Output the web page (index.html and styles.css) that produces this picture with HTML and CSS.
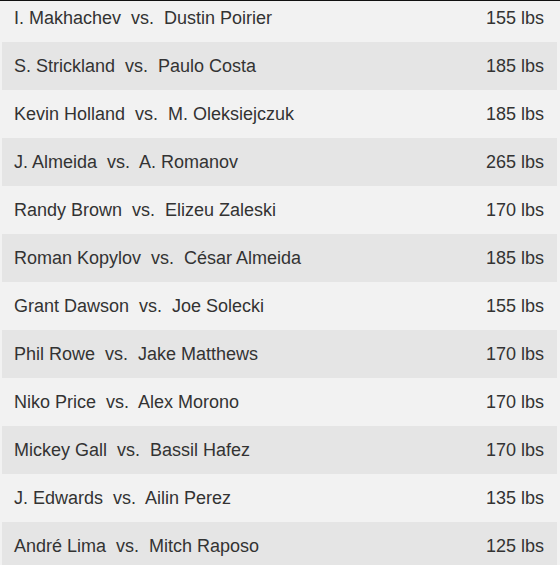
FILE: index.html
```html
<!DOCTYPE html>
<html>
<head>
<meta charset="utf-8">
<link rel="stylesheet" href="styles.css">
</head>
<body>
<ul class="fights">
  <li class="fight"><span class="bout">I. Makhachev&nbsp; vs.&nbsp; Dustin Poirier</span><span class="weight">155 lbs</span></li>
  <li class="fight"><span class="bout">S. Strickland&nbsp; vs.&nbsp; Paulo Costa</span><span class="weight">185 lbs</span></li>
  <li class="fight"><span class="bout">Kevin Holland&nbsp; vs.&nbsp; M. Oleksiejczuk</span><span class="weight">185 lbs</span></li>
  <li class="fight"><span class="bout">J. Almeida&nbsp; vs.&nbsp; A. Romanov</span><span class="weight">265 lbs</span></li>
  <li class="fight"><span class="bout">Randy Brown&nbsp; vs.&nbsp; Elizeu Zaleski</span><span class="weight">170 lbs</span></li>
  <li class="fight"><span class="bout">Roman Kopylov&nbsp; vs.&nbsp; César Almeida</span><span class="weight">185 lbs</span></li>
  <li class="fight"><span class="bout">Grant Dawson&nbsp; vs.&nbsp; Joe Solecki</span><span class="weight">155 lbs</span></li>
  <li class="fight"><span class="bout">Phil Rowe&nbsp; vs.&nbsp; Jake Matthews</span><span class="weight">170 lbs</span></li>
  <li class="fight"><span class="bout">Niko Price&nbsp; vs.&nbsp; Alex Morono</span><span class="weight">170 lbs</span></li>
  <li class="fight"><span class="bout">Mickey Gall&nbsp; vs.&nbsp; Bassil Hafez</span><span class="weight">170 lbs</span></li>
  <li class="fight"><span class="bout">J. Edwards&nbsp; vs.&nbsp; Ailin Perez</span><span class="weight">135 lbs</span></li>
  <li class="fight"><span class="bout">André Lima&nbsp; vs.&nbsp; Mitch Raposo</span><span class="weight">125 lbs</span></li>
</ul>
</body>
</html>
```
FILE: styles.css
```css
html, body {
  margin: 0;
  padding: 0;
}
body {
  background: #f2f2f2;
  border-top: 1px solid #111;
  font-family: "Liberation Sans", Arial, sans-serif;
  font-size: 18px;
  color: #333;
  overflow: hidden;
}
.fights {
  list-style: none;
  margin: -7px 3px 0 2px;
  padding: 0;
}
.fight {
  height: 48px;
  display: flex;
  align-items: center;
  justify-content: space-between;
  padding: 0 13px 0 12px;
}
.fight:nth-child(even) {
  background: #e5e5e5;
}
```
